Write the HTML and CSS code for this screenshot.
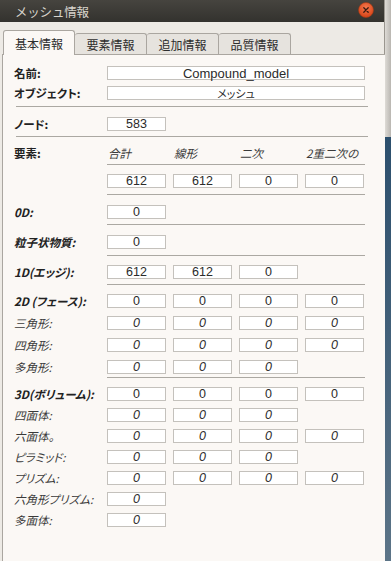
FILE: index.html
```
<!DOCTYPE html>
<html lang="ja">
<head>
  <meta charset="UTF-8" />
  <meta name="viewport" content="width=device-width, initial-scale=1" />
  <title>メッシュ情報</title>
  <link rel="stylesheet" href="styles.css">
</head>
<body>
  <div class="pencere">
    <div class="baslik">
      <span class="baslik-yazi">メッシュ情報</span>
      <span class="kapat">
        <svg width="16" height="16" viewBox="0 0 16 16">
          <defs>
            <radialGradient id="kg" cx="50%" cy="35%" r="60%">
              <stop offset="0%" stop-color="#f47a4f"/>
              <stop offset="100%" stop-color="#d9461a"/>
            </radialGradient>
          </defs>
          <circle cx="8" cy="8" r="7.5" fill="url(#kg)" stroke="#9b3a17" stroke-width="0.6"/>
          <path d="M5.8 5.8 L10.2 10.2 M10.2 5.8 L5.8 10.2" stroke="#3a1a10" stroke-width="1.3" stroke-linecap="round"/>
        </svg>
      </span>
    </div>

    <div class="sekmeler">
      <div class="sekme aktif">基本情報</div>
      <div class="sekme">要素情報</div>
      <div class="sekme">追加情報</div>
      <div class="sekme">品質情報</div>
    </div>

    <div class="panel">
      <div class="satir genis">
        <span class="etiket kalin">名前:</span>
        <span class="kutu uzun">Compound_model</span>
      </div>
      <div class="satir genis s-obj">
        <span class="etiket kalin">オブジェクト:</span>
        <span class="kutu uzun kucuk">メッシュ</span>
      </div>
      <div class="cizgi tam c1"></div>
      <div class="satir s-node">
        <span class="etiket kalin">ノード:</span>
        <span class="kutu">583</span>
      </div>
      <div class="cizgi tam c2"></div>

      <div class="satir s-head">
        <span class="etiket kalin">要素:</span>
        <span class="sutun">合計</span>
        <span class="sutun">線形</span>
        <span class="sutun">二次</span>
        <span class="sutun">2重二次の</span>
      </div>
      <div class="cizgi kisa c3"></div>
      <div class="satir s-top">
        <span class="etiket"></span>
        <span class="kutu">612</span>
        <span class="kutu">612</span>
        <span class="kutu">0</span>
        <span class="kutu">0</span>
      </div>
      <div class="cizgi kisa c4"></div>
      <div class="satir s-0d">
        <span class="etiket kalin egik">0D:</span>
        <span class="kutu">0</span>
      </div>
      <div class="cizgi kisa c4"></div>
      <div class="satir s-0d">
        <span class="etiket kalin egik">粒子状物質:</span>
        <span class="kutu">0</span>
      </div>
      <div class="cizgi kisa c5"></div>
      <div class="satir s-1d">
        <span class="etiket kalin egik">1D(エッジ):</span>
        <span class="kutu">612</span>
        <span class="kutu">612</span>
        <span class="kutu">0</span>
      </div>
      <div class="cizgi kisa c4"></div>

      <div class="satir s-2d">
        <span class="etiket kalin egik">2D (フェース):</span>
        <span class="kutu">0</span>
        <span class="kutu">0</span>
        <span class="kutu">0</span>
        <span class="kutu">0</span>
      </div>
      <div class="satir alt">
        <span class="etiket egik">三角形:</span>
        <span class="kutu egik">0</span>
        <span class="kutu egik">0</span>
        <span class="kutu egik">0</span>
        <span class="kutu egik">0</span>
      </div>
      <div class="satir alt">
        <span class="etiket egik">四角形:</span>
        <span class="kutu egik">0</span>
        <span class="kutu egik">0</span>
        <span class="kutu egik">0</span>
        <span class="kutu egik">0</span>
      </div>
      <div class="satir alt">
        <span class="etiket egik">多角形:</span>
        <span class="kutu egik">0</span>
        <span class="kutu egik">0</span>
        <span class="kutu egik">0</span>
      </div>
      <div class="cizgi kisa c6"></div>

      <div class="satir s-3d">
        <span class="etiket kalin egik">3D(ボリューム):</span>
        <span class="kutu">0</span>
        <span class="kutu">0</span>
        <span class="kutu">0</span>
        <span class="kutu">0</span>
      </div>
      <div class="satir alt3">
        <span class="etiket egik">四面体:</span>
        <span class="kutu egik">0</span>
        <span class="kutu egik">0</span>
        <span class="kutu egik">0</span>
      </div>
      <div class="satir alt3">
        <span class="etiket egik">六面体。</span>
        <span class="kutu egik">0</span>
        <span class="kutu egik">0</span>
        <span class="kutu egik">0</span>
        <span class="kutu egik">0</span>
      </div>
      <div class="satir alt3">
        <span class="etiket egik">ピラミッド:</span>
        <span class="kutu egik">0</span>
        <span class="kutu egik">0</span>
        <span class="kutu egik">0</span>
      </div>
      <div class="satir alt3">
        <span class="etiket egik">プリズム:</span>
        <span class="kutu egik">0</span>
        <span class="kutu egik">0</span>
        <span class="kutu egik">0</span>
        <span class="kutu egik">0</span>
      </div>
      <div class="satir alt3">
        <span class="etiket egik">六角形プリズム:</span>
        <span class="kutu egik">0</span>
      </div>
      <div class="satir alt3">
        <span class="etiket egik">多面体:</span>
        <span class="kutu egik">0</span>
      </div>
    </div>
  </div>
  <div class="masaustu">
    <div class="ust-gri"></div>
    <div class="mavi"></div>
  </div>
</body>
</html>
```

FILE: styles.css
```
body {
  margin: 0;
  padding: 0;
  display: flex;
  height: 561px;
  overflow: hidden;
  background: #2f5677;
  font-family: "Liberation Sans", "Noto Sans CJK JP", sans-serif;
  font-size: 12px;
  color: #2b2b2b;
}

.pencere {
  width: 384px;
  flex: none;
  background: #edeae5;
  border-right: 1px solid #9a968f;
  display: flex;
  flex-direction: column;
}

.baslik {
  height: 22px;
  background: linear-gradient(#46443f, #33322e);
  display: flex;
  align-items: center;
  justify-content: space-between;
  padding: 0 10px 0 15px;
  flex: none;
}

.baslik-yazi {
  color: #d8d4cc;
  font-family: "Noto Sans CJK JP", sans-serif;
  font-size: 12.5px;
  letter-spacing: -0.2px;
}

.kapat {
  display: flex;
  margin-top: -2px;
}

.sekmeler {
  display: flex;
  align-items: flex-end;
  padding: 9px 0 0 3px;
  height: 23px;
  flex: none;
}

.sekme {
  width: 71px;
  height: 20px;
  border: 1px solid #aaa6a0;
  border-bottom: none;
  border-left: none;
  border-radius: 3px 3px 0 0;
  background: #e6e3de;
  display: flex;
  align-items: center;
  justify-content: center;
  font-family: "Noto Sans CJK JP", sans-serif;
  font-size: 12px;
  color: #2d2d2d;
}

.sekme.aktif {
  width: 70px;
  height: 24px;
  border-left: 1px solid #aaa6a0;
  background: #fbf8f5;
  position: relative;
  z-index: 1;
  margin-bottom: -1px;
}

.panel {
  margin-left: 2px;
  width: 372px;
  flex: 1;
  border: 1px solid #aaa6a0;
  border-bottom: none;
  background: #fbf8f5;
  padding: 10px 0 0 10px;
}

.satir {
  display: grid;
  grid-template-columns: 87px repeat(4, 59px);
  column-gap: 7px;
  height: 14px;
  align-items: center;
}

.satir.genis {
  grid-template-columns: 87px 258px;
}

.s-obj { margin-top: 6px; }
.s-node { margin-top: 9px; }
.s-head { margin-top: 8px; }
.s-top { margin-top: 9px; }
.s-0d { margin-top: 9px; }
.s-1d { margin-top: 8px; }
.s-2d { margin-top: 8px; }
.alt { margin-top: 8px; }
.s-3d { margin-top: 8px; }
.alt3 { margin-top: 7px; }

.etiket {
  font-family: "Noto Sans CJK JP", sans-serif;
  font-size: 11.5px;
  font-feature-settings: "palt";
  white-space: nowrap;
  color: #3a3a3a;
  padding-left: 1px;
}

.kalin {
  font-weight: bold;
  color: #222;
}

.egik {
  font-style: italic;
}

.kutu {
  height: 14px;
  box-sizing: border-box;
  border: 1px solid #c4c1bc;
  background: #fff;
  display: flex;
  align-items: center;
  justify-content: center;
  font-size: 12.5px;
  color: #2b2b2b;
}

.kutu.uzun {
  font-size: 13px;
}

.kutu.kucuk {
  font-family: "Noto Sans CJK JP", sans-serif;
  font-feature-settings: "palt";
  font-size: 11px;
}

.sutun {
  font-family: "Noto Sans CJK JP", sans-serif;
  font-style: italic;
  font-size: 11.5px;
  color: #3a3a3a;
  white-space: nowrap;
  padding-left: 1px;
}

.cizgi {
  height: 1px;
  background: #aba8a2;
}

.cizgi.tam {
  width: 352px;
  margin-left: 3px;
}

.cizgi.kisa {
  width: 258px;
  margin-left: 94px;
}

.c1 { margin-top: 7px; }
.c2 { margin-top: 6px; }
.c3 { margin-top: 5px; }
.c4 { margin-top: 6px; }
.c5 { margin-top: 7px; }
.c6 { margin-top: 4px; }

.masaustu {
  flex: 1;
  display: flex;
  flex-direction: column;
}

.ust-gri {
  height: 137px;
  background: linear-gradient(90deg, #dedbd6, #b9b6b1);
}

.mavi {
  flex: 1;
  background: linear-gradient(#2c4f6d, #5c7487);
}
```
